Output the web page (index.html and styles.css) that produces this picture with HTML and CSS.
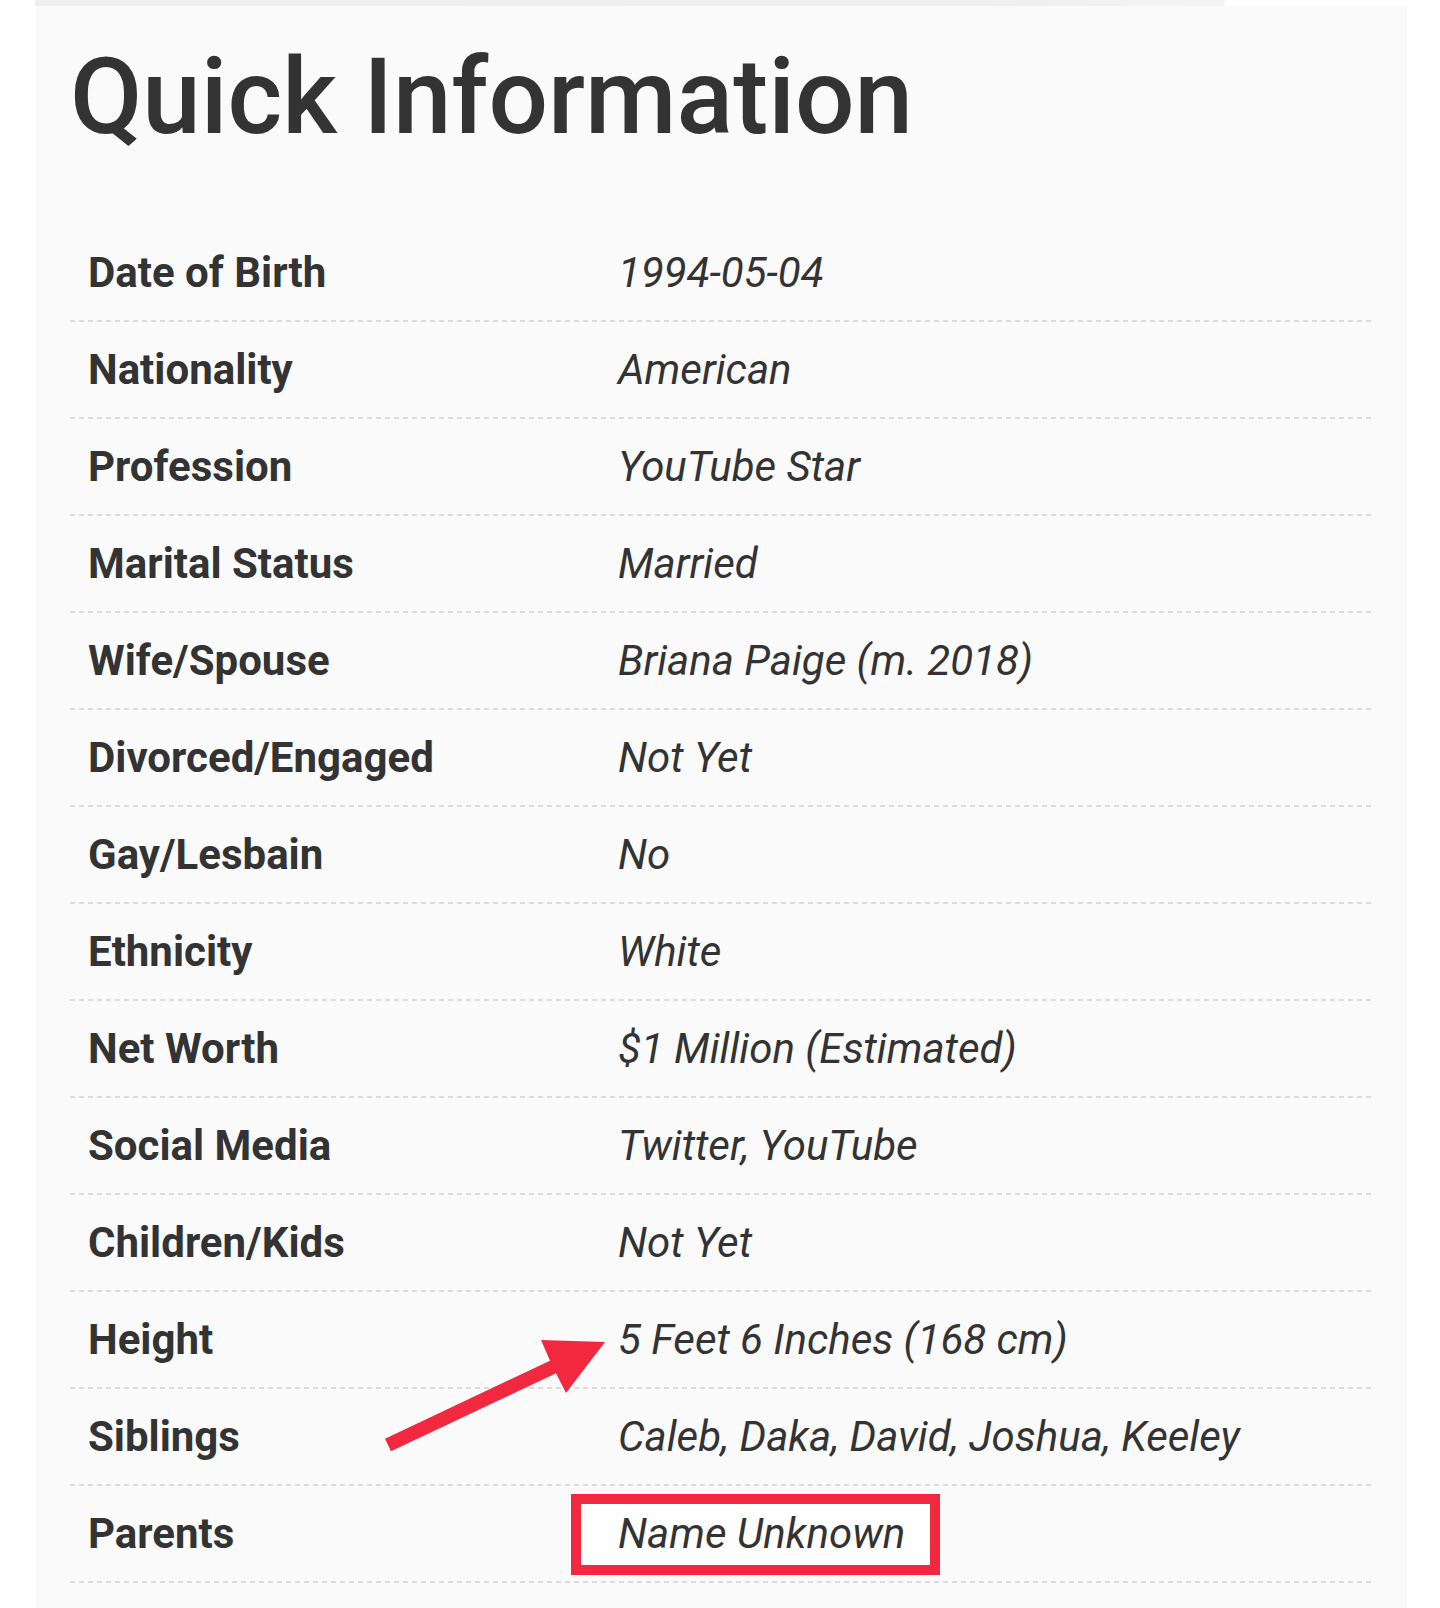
FILE: index.html
```html
<!DOCTYPE html>
<html lang="en">
<head>
<meta charset="utf-8">
<title>Quick Information</title>
<link rel="stylesheet" href="styles.css">
</head>
<body>
<div class="topbar"></div>
<section class="panel">
  <h1 class="title">Quick Information</h1>
  <div class="info">
    <div class="row"><div class="label">Date of Birth</div><div class="value">1994-05-04</div></div>
    <div class="row"><div class="label">Nationality</div><div class="value">American</div></div>
    <div class="row"><div class="label">Profession</div><div class="value">YouTube Star</div></div>
    <div class="row"><div class="label">Marital Status</div><div class="value">Married</div></div>
    <div class="row"><div class="label">Wife/Spouse</div><div class="value">Briana Paige (m. 2018)</div></div>
    <div class="row"><div class="label">Divorced/Engaged</div><div class="value">Not Yet</div></div>
    <div class="row"><div class="label">Gay/Lesbain</div><div class="value">No</div></div>
    <div class="row"><div class="label">Ethnicity</div><div class="value">White</div></div>
    <div class="row"><div class="label">Net Worth</div><div class="value">$1 Million (Estimated)</div></div>
    <div class="row"><div class="label">Social Media</div><div class="value">Twitter, YouTube</div></div>
    <div class="row"><div class="label">Children/Kids</div><div class="value">Not Yet</div></div>
    <div class="row"><div class="label">Height</div><div class="value">5 Feet 6 Inches (168 cm)</div></div>
    <div class="row"><div class="label">Siblings</div><div class="value">Caleb, Daka, David, Joshua, Keeley</div></div>
    <div class="row"><div class="label">Parents</div><div class="value value-marked"><span class="mark-box"></span><span class="value-text">Name Unknown</span></div></div>
  </div>
  <svg class="arrow" width="230" height="120" viewBox="0 0 230 120" aria-hidden="true">
    <polygon points="5,103.7 170,25.7 161,5 225,7 186,58 176,38.3 11,116.3" fill="#f1283f"/>
  </svg>
</section>
</body>
</html>
```
FILE: styles.css
```css
html, body {
  margin: 0;
  padding: 0;
  background: #ffffff;
}

body {
  font-family: Roboto, "Liberation Sans", Arial, sans-serif;
  color: #333333;
  height: 1608px;
  overflow: hidden;
}

.topbar {
  margin-left: 35px;
  width: 1190px;
  height: 6px;
  background: linear-gradient(to right, #eeeeee 0%, #efefef 80%, #f4f4f4 100%);
}

.panel {
  position: relative;
  margin-left: 36px;
  width: 1371px;
  min-height: 1602px;
  background: #fafafa;
  padding: 29px 34px 0 34px;
  box-sizing: border-box;
}

.title {
  margin: 0;
  font-size: 105px;
  font-weight: 500;
  line-height: 1.2;
  color: #333333;
  letter-spacing: 0;
}

.info {
  margin-top: 64px;
  display: flex;
  flex-direction: column;
}

.row {
  display: grid;
  grid-template-columns: 548px 1fr;
  align-items: center;
  height: 97px;
  box-sizing: border-box;
  padding: 0 0 2px 0;
  background-image: linear-gradient(to right, #dcdcdc 5px, transparent 5px);
  background-size: 9px 2px;
  background-repeat: repeat-x;
  background-position: left bottom;
}

.label {
  padding-left: 18px;
  font-size: 42px;
  font-weight: 700;
  color: #333333;
}

.value {
  position: relative;
  font-size: 42px;
  font-style: italic;
  font-weight: 400;
  color: #333333;
}

.value-marked {
  height: 100%;
  display: flex;
  align-items: center;
}

.value-text {
  position: relative;
}

.mark-box {
  position: absolute;
  left: -47px;
  top: 8px;
  width: 369px;
  height: 81px;
  box-sizing: border-box;
  border: 10px solid #f1283f;
  background: #ffffff;
}

.arrow {
  position: absolute;
  left: 344px;
  top: 1329px;
}
```
